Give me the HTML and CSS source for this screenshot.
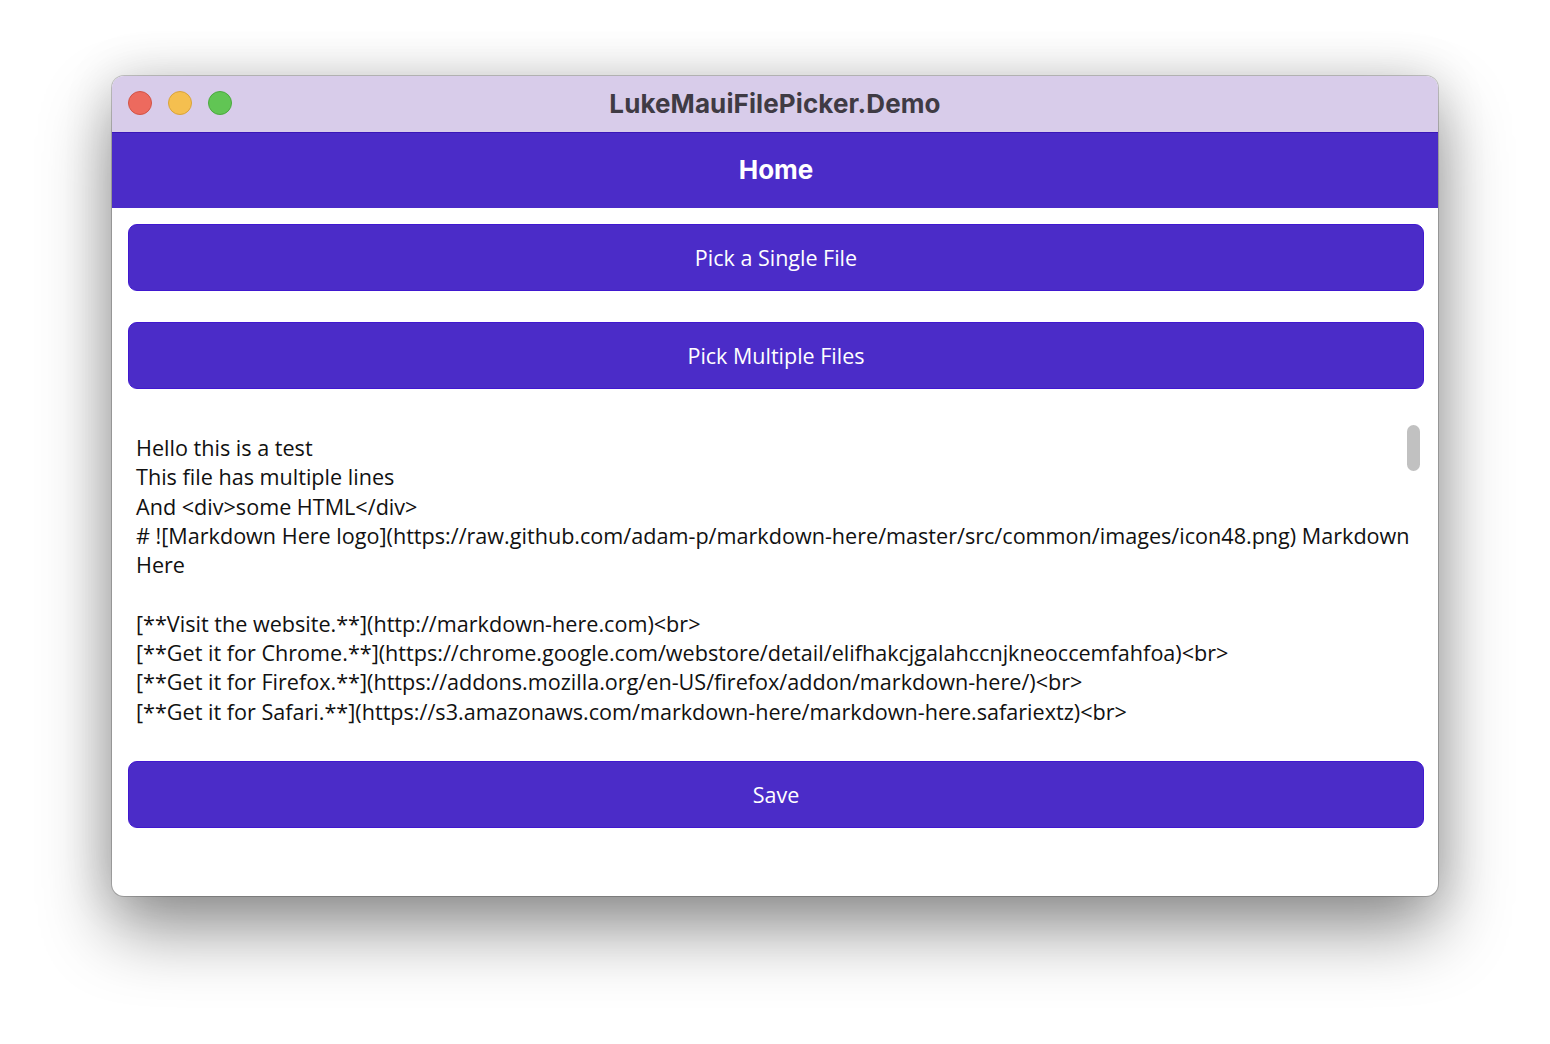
FILE: index.html
```html
<!DOCTYPE html>
<html>
<head>
<meta charset="utf-8">
<link rel="stylesheet" href="styles.css">
</head>
<body>
<div class="window">
  <div class="titlebar">
    <div class="lights">
      <span class="light red"></span>
      <span class="light yellow"></span>
      <span class="light green"></span>
    </div>
    <div class="title">LukeMauiFilePicker.Demo</div>
  </div>
  <div class="navbar">Home</div>
  <div class="content">
    <button class="btn">Pick a Single File</button>
    <button class="btn">Pick Multiple Files</button>
    <div class="editor">
      <div class="text">Hello this is a test
This file has multiple lines
And &lt;div&gt;some HTML&lt;/div&gt;
# ![Markdown Here logo](https://raw.github.com/adam-p/markdown-here/master/src/common/images/icon48.png) Markdown Here

[**Visit the website.**](http://markdown-here.com)&lt;br&gt;
[**Get it for Chrome.**](https://chrome.google.com/webstore/detail/elifhakcjgalahccnjkneoccemfahfoa)&lt;br&gt;
[**Get it for Firefox.**](https://addons.mozilla.org/en-US/firefox/addon/markdown-here/)&lt;br&gt;
[**Get it for Safari.**](https://s3.amazonaws.com/markdown-here/markdown-here.safariextz)&lt;br&gt;</div>
      <div class="thumb"></div>
    </div>
    <button class="btn save">Save</button>
  </div>
</div>
</body>
</html>
```

FILE: styles.css
```css
html, body {
  margin: 0;
  padding: 0;
}
body {
  width: 1550px;
  height: 1044px;
  background: #ffffff;
  overflow: hidden;
  padding-top: 76px;
  box-sizing: border-box;
}
.window {
  width: 1326px;
  height: 820px;
  margin-left: 112px;
  border-radius: 12px;
  background: #ffffff;
  overflow: hidden;
  box-shadow: 0 0 0 1px rgba(0,0,0,0.2), 0 34px 70px rgba(0,0,0,0.42), 0 0 50px rgba(0,0,0,0.14);
  display: flex;
  flex-direction: column;
}
.titlebar {
  height: 56px;
  flex: none;
  background: #d8ccea;
  position: relative;
  display: flex;
  align-items: center;
  justify-content: center;
}
.lights {
  position: absolute;
  left: 16px;
  top: 15px;
  display: flex;
  gap: 16px;
}
.light {
  width: 24px;
  height: 24px;
  border-radius: 50%;
  box-sizing: border-box;
}
.red { background: #ed6a5e; border: 1px solid #d25346; }
.yellow { background: #f5bf4f; border: 1px solid #d9a33a; }
.green { background: #61c554; border: 1px solid #4ba93f; }
.title {
  font-family: Inter, "Liberation Sans", sans-serif;
  font-weight: 700;
  font-size: 26px;
  color: #3f3b44;
  margin-top: -2px;
  letter-spacing: 0.1px;
}
.navbar {
  height: 76px;
  flex: none;
  background: #4b2cc8;
  border-top: 1px solid #3a17b8;
  box-sizing: border-box;
  display: flex;
  align-items: center;
  justify-content: center;
  color: #ffffff;
  font-family: Inter, "Liberation Sans", sans-serif;
  font-weight: 700;
  font-size: 26px;
  padding-left: 2px;
  padding-bottom: 2px;
}
.content {
  padding: 16px 14px 0 16px;
  display: flex;
  flex-direction: column;
}
.btn {
  height: 67px;
  border: 1px solid #4018cf;
  border-radius: 9px;
  background: #4b2cc8;
  color: #ffffff;
  font-family: "Open Sans", sans-serif;
  font-size: 21.5px;
  font-weight: 500;
  padding: 0;
  margin: 0 0 31px 0;
  width: 1296px;
}
.editor {
  position: relative;
  height: 310px;
}
.text {
  white-space: pre-wrap;
  font-family: "Open Sans", sans-serif;
  font-size: 21.6px;
  line-height: 29.3px;
  color: #111111;
  padding: 13px 6px 0 8px;
  width: 1282px;
}
.thumb {
  position: absolute;
  right: 4px;
  top: 5px;
  width: 13px;
  height: 46px;
  border-radius: 7px;
  background: #c1c1c1;
}
.save {
  margin-top: 31px;
}
```
